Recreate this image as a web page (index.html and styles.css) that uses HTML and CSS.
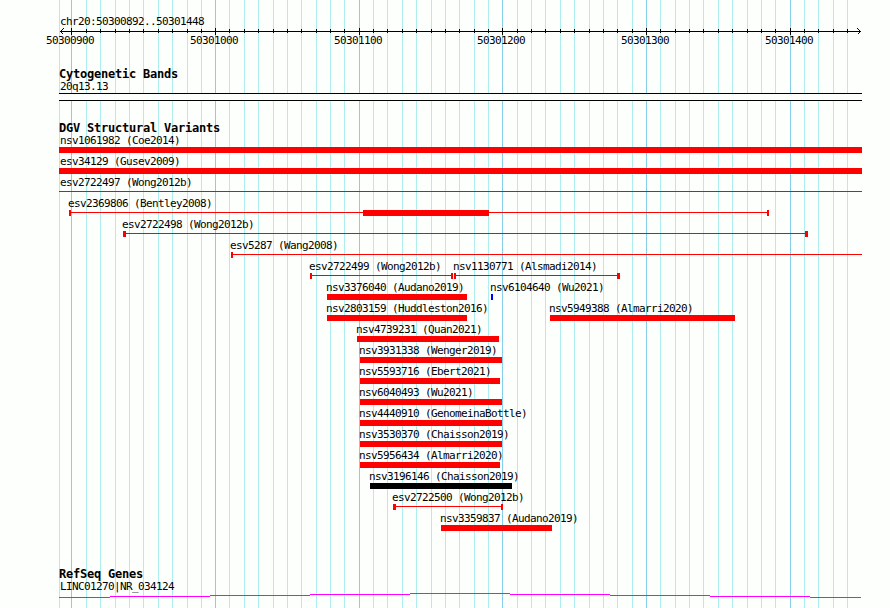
FILE: index.html
```
<!DOCTYPE html>
<html lang="en">
<head>
  <meta charset="utf-8">
  <title>chr20:50300892..50301448</title>
  <link rel="stylesheet" href="styles.css">
</head>
<body>
  <div class="browser">
    <svg class="gridlines" width="890" height="608" shape-rendering="crispEdges">
      <path class="minor" d="M59.5 0v608M86.5 0v608M100.5 0v608M115.5 0v608M129.5 0v608M143.5 0v608M158.5 0v608M172.5 0v608M187.5 0v608M201.5 0v608M229.5 0v608M244.5 0v608M258.5 0v608M273.5 0v608M287.5 0v608M301.5 0v608M316.5 0v608M330.5 0v608M344.5 0v608M373.5 0v608M387.5 0v608M402.5 0v608M416.5 0v608M431.5 0v608M445.5 0v608M459.5 0v608M474.5 0v608M488.5 0v608M517.5 0v608M531.5 0v608M545.5 0v608M560.5 0v608M574.5 0v608M589.5 0v608M603.5 0v608M617.5 0v608M632.5 0v608M660.5 0v608M675.5 0v608M689.5 0v608M703.5 0v608M718.5 0v608M732.5 0v608M747.5 0v608M761.5 0v608M775.5 0v608M804.5 0v608M818.5 0v608M833.5 0v608M847.5 0v608"/>
      <path class="major" d="M71.5 0v608M215.5 0v608M359.5 0v608M502.5 0v608M646.5 0v608M790.5 0v608"/>
    </svg>

    <div class="ruler">
      <div class="label">chr20:50300892..50301448</div>
      <svg class="axis" width="890" height="7" shape-rendering="crispEdges">
        <path d="M60 3.5H861M71.5 0v7M215.5 0v7M359.5 0v7M502.5 0v7M646.5 0v7M790.5 0v7"/>
        <path d="M86.5 1v4M100.5 1v4M115.5 1v4M129.5 1v4M143.5 1v4M158.5 1v4M172.5 1v4M187.5 1v4M201.5 1v4M229.5 1v4M244.5 1v4M258.5 1v4M273.5 1v4M287.5 1v4M301.5 1v4M316.5 1v4M330.5 1v4M344.5 1v4M373.5 1v4M387.5 1v4M402.5 1v4M416.5 1v4M431.5 1v4M445.5 1v4M459.5 1v4M474.5 1v4M488.5 1v4M517.5 1v4M531.5 1v4M545.5 1v4M560.5 1v4M574.5 1v4M589.5 1v4M603.5 1v4M617.5 1v4M632.5 1v4M660.5 1v4M675.5 1v4M689.5 1v4M703.5 1v4M718.5 1v4M732.5 1v4M747.5 1v4M761.5 1v4M775.5 1v4M804.5 1v4M818.5 1v4M833.5 1v4M847.5 1v4"/>
        <path d="M63.5 0.5L60.5 3.5L63.5 6.5M857.5 0.5L860.5 3.5L857.5 6.5"/>
      </svg>
      <div class="row ticks">
        <span style="--x: 46px">50300900</span>
        <span style="--x: 190px">50301000</span>
        <span style="--x: 334px">50301100</span>
        <span style="--x: 477px">50301200</span>
        <span style="--x: 621px">50301300</span>
        <span style="--x: 765px">50301400</span>
      </div>
    </div>

    <div class="track cytobands">
      <h2>Cytogenetic Bands</h2>
      <div class="label">20q13.13</div>
      <div class="band"></div>
    </div>

    <div class="track variants">
      <h2>DGV Structural Variants</h2>
      <div class="row">
        <div class="feature" style="--x: 59px; --w: 803px"><span class="first">nsv1061982 (Coe2014)</span><i class="bar"></i></div>
      </div>
      <div class="row">
        <div class="feature" style="--x: 59px; --w: 803px"><span class="first">esv34129 (Gusev2009)</span><i class="bar"></i></div>
      </div>
      <div class="row">
        <div class="feature" style="--x: 59px; --w: 803px"><span class="first">esv2722497 (Wong2012b)</span><i class="span"></i></div>
      </div>
      <div class="row">
        <div class="feature" style="--x: 69px; --w: 700px; --l: 2px; --r: 2px"><span>esv2369806 (Bentley2008)</span><i class="span"><b style="--x: 292px; --w: 126px"></b></i></div>
      </div>
      <div class="row">
        <div class="feature" style="--x: 123px; --w: 685px; --l: 3px; --r: 3px"><span>esv2722498 (Wong2012b)</span><i class="span"></i></div>
      </div>
      <div class="row">
        <div class="feature" style="--x: 231px; --w: 631px; --l: 2px"><span>esv5287 (Wang2008)</span><i class="span"></i></div>
      </div>
      <div class="row">
        <div class="feature" style="--x: 310px; --w: 143px; --l: 2px; --r: 2px"><span>esv2722499 (Wong2012b)</span><i class="span"></i></div>
        <div class="feature" style="--x: 454px; --w: 166px; --l: 2px; --r: 3px"><span>nsv1130771 (Alsmadi2014)</span><i class="span"></i></div>
      </div>
      <div class="row">
        <div class="feature" style="--x: 327px; --w: 140px"><span>nsv3376040 (Audano2019)</span><i class="bar"></i></div>
        <div class="feature" style="--x: 491px; --w: 2px"><span>nsv6104640 (Wu2021)</span><i class="bar gain"></i></div>
      </div>
      <div class="row">
        <div class="feature" style="--x: 327px; --w: 140px"><span>nsv2803159 (Huddleston2016)</span><i class="bar"></i></div>
        <div class="feature" style="--x: 550px; --w: 185px"><span>nsv5949388 (Almarri2020)</span><i class="bar"></i></div>
      </div>
      <div class="row">
        <div class="feature" style="--x: 357px; --w: 142px"><span>nsv4739231 (Quan2021)</span><i class="bar"></i></div>
      </div>
      <div class="row">
        <div class="feature" style="--x: 360px; --w: 142px"><span>nsv3931338 (Wenger2019)</span><i class="bar"></i></div>
      </div>
      <div class="row">
        <div class="feature" style="--x: 360px; --w: 140px"><span>nsv5593716 (Ebert2021)</span><i class="bar"></i></div>
      </div>
      <div class="row">
        <div class="feature" style="--x: 360px; --w: 142px"><span>nsv6040493 (Wu2021)</span><i class="bar"></i></div>
      </div>
      <div class="row">
        <div class="feature" style="--x: 360px; --w: 142px"><span>nsv4440910 (GenomeinaBottle)</span><i class="bar"></i></div>
      </div>
      <div class="row">
        <div class="feature" style="--x: 360px; --w: 142px"><span>nsv3530370 (Chaisson2019)</span><i class="bar"></i></div>
      </div>
      <div class="row">
        <div class="feature" style="--x: 360px; --w: 140px"><span>nsv5956434 (Almarri2020)</span><i class="bar"></i></div>
      </div>
      <div class="row">
        <div class="feature" style="--x: 370px; --w: 142px"><span>nsv3196146 (Chaisson2019)</span><i class="bar complex"></i></div>
      </div>
      <div class="row">
        <div class="feature" style="--x: 393px; --w: 110px; --l: 3px; --r: 2px"><span>esv2722500 (Wong2012b)</span><i class="span"></i></div>
      </div>
      <div class="row">
        <div class="feature" style="--x: 441px; --w: 111px"><span>nsv3359837 (Audano2019)</span><i class="bar"></i></div>
      </div>
    </div>

    <div class="track genes">
      <h2>RefSeq Genes</h2>
      <div class="label">LINC01270|NR_034124</div>
      <svg class="intron" width="890" height="5" shape-rendering="crispEdges">
        <path d="M59 4.5H110M110 3.5H210M210 2.5H310M310 1.5H410M410 0.5H510M510 1.5H610M610 2.5H710M710 3.5H810M810 4.5H861"/>
      </svg>
    </div>
  </div>
</body>
</html>
```

FILE: styles.css
```
body {
  margin: 0;
  background: #fdfffc;
  color: #000;
  font: 11px/13px "DejaVu Sans Mono", monospace;
  letter-spacing: -0.622px;
}
.browser {
  position: relative;
  width: 890px;
  height: 608px;
  overflow: hidden;
  white-space: nowrap;
}
svg {
  display: block;
  fill: none;
}

/* grid behind all tracks */
.gridlines {
  position: absolute;
  top: 0;
  left: 0;
  z-index: -1;
}
.gridlines .minor {
  stroke: #afeeee;
}
.gridlines .major {
  stroke: #87ceeb;
}

.label {
  padding-left: 60px;
}
.row {
  display: grid;
  height: 21px;
}
.row > * {
  grid-area: 1 / 1;
  margin-left: var(--x);
}

.ruler {
  padding-top: 15px;
}
.axis {
  stroke: #000;
}
.ticks {
  height: 13px;
  margin-top: -1px;
}

.track h2 {
  margin: 0;
  padding-left: 59px;
  font-size: 12px;
  line-height: 12px;
  letter-spacing: -0.224px;
}
.cytobands {
  margin-top: 21px;
}
.variants {
  margin-top: 21px;
}
.genes {
  margin-top: 35px;
}
.band {
  width: 803px;
  height: 6px;
  margin-left: 59px;
  background: #fdfffc;
  border: solid #000;
  border-width: 1px 0;
}

.feature {
  width: var(--w);
}
.feature > span {
  display: block;
  height: 13px;
  margin-left: -1px;
}
.feature > .first {
  margin-left: 1px;
}
.bar {
  display: block;
  height: 6px;
  background: #f00;
}
.bar.gain {
  background: #00f;
}
.bar.complex {
  background: #000;
}

/* thin line with an end cap on either side */
.span {
  display: block;
  box-sizing: border-box;
  height: 6px;
  border: solid #f00;
  border-width: 0 var(--r, 0) 0 var(--l, 0);
  background: linear-gradient(#f00, #f00) 0 2px / 100% 1px no-repeat;
}
.span b {
  display: block;
  width: var(--w);
  height: 6px;
  margin-left: var(--x);
  background: #f00;
}

.intron {
  stroke: #f0f;
}
```
